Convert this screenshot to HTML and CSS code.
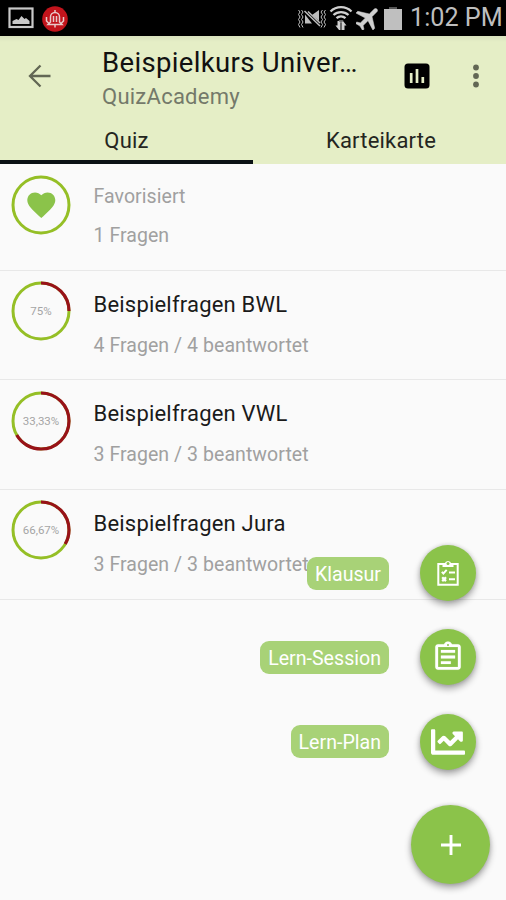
FILE: index.html
```html
<!DOCTYPE html>
<html lang="de">
<head>
    <meta charset="UTF-8">
    <meta name="viewport" content="width=device-width, initial-scale=1.0">
    <title>Beispielkurs</title>
    <link rel="stylesheet" href="styles.css">
</head>
<body>
    <div class="app">
        <div class="status-bar">
            <div class="status-left">
                <svg class="icon-picture" viewBox="0 0 26 22" width="26" height="22">
                    <rect x="1.5" y="1.5" width="23" height="18.500" fill="none" stroke="#c9c9c9" stroke-width="2.2"/>
                    <path d="M4.500 17v-3l4-2 2 1 3-4 3 3 1.500-1 3.500 3v3z" fill="#c9c9c9"/>
                </svg>
                <svg class="icon-alarm" viewBox="0 0 26 26" width="26" height="26">
                    <circle cx="13" cy="13" r="12.800" fill="#c2141c"/>
                    <path d="M6 18.500l2.500-2.500v-5a4.500 4.500 0 0 1 9 0v5l2.500 2.500zM13 4v3M13 18.500v3M11.500 10v6M14.500 10v6M4.500 11v4l2 2M21.500 11v4l-2 2" fill="none" stroke="#e8caca" stroke-width="1.500"/>
                </svg>
            </div>
            <div class="status-right">
                <svg class="icon-mute" viewBox="0 0 30 22" width="30" height="22">
                    <path d="M1.500 2l1.500 2-1.500 2.500 1.500 2.500-1.500 2.500 1.500 2.500-1.500 2.500 1.500 3M4.500 2l1.500 2-1.500 2.500 1.500 2.500-1.500 2.500 1.500 2.500-1.500 2.500 1.500 3M25.500 2l-1.500 2 1.500 2.500-1.500 2.500 1.500 2.500-1.500 2.500 1.500 2.500-1.500 3M28.500 2l-1.500 2 1.500 2.500-1.500 2.500 1.500 2.500-1.500 2.500 1.500 2.500-1.500 3" fill="none" stroke="#bdbdbd" stroke-width="1"/>
                    <path d="M8 6.500v9h7zM15 7l7-5v11z" fill="#bdbdbd"/>
                    <path d="M7.500 3l15.500 15M11 3.500l12 11.500" stroke="#bdbdbd" stroke-width="1.500"/>
                </svg>
                <svg class="icon-wifi" viewBox="0 0 24 26" width="24" height="26">
                    <path d="M1.500 6.500a15 15 0 0 1 21 0M4.500 10a11 11 0 0 1 15 0M7.500 13.200a6.800 6.800 0 0 1 9 0" fill="none" stroke="#cfcfcf" stroke-width="2.300"/>
                    <path d="M9.500 15.500h5l-2.500 2zM6.500 20.500l3.500 4.500h1.500v-9h-3v4.500zM17.500 20.500l-3.500-4.500h-1.500v9h3v-4.500z" fill="#cfcfcf"/>
                </svg>
                <svg class="icon-plane" viewBox="2.500 2.500 19 19" width="24" height="24">
                    <path transform="rotate(45 12 12)" d="M21.500 16v-2l-8-5V3.500c0-.83-.67-1.500-1.500-1.500s-1.500.67-1.500 1.500V9l-8 5v2l8-2.500V19l-2.500 1.500V22l4-1 4 1v-1.500L13.500 19v-5.500z" fill="#d0d0d0" stroke="#d0d0d0" stroke-width=".4"/>
                </svg>
                <svg class="icon-battery" viewBox="0 0 18 23" width="18" height="23">
                    <path d="M5 0h8v2H5z" fill="#555"/>
                    <path d="M0 2h18v21H0z" fill="#bfbfbf"/>
                </svg>
                <span class="clock">1:02 PM</span>
            </div>
        </div>

        <header class="header">
            <div class="toolbar">
                <svg class="back" viewBox="0 0 24 24" width="24" height="24">
                    <path d="M22.500 12H2M12.500 1.500L2 12l10.500 10.500" fill="none" stroke="#626754" stroke-width="2.300"/>
                </svg>
                <div class="titles">
                    <h1>Beispielkurs Univer…</h1>
                    <p>QuizAcademy</p>
                </div>
                <svg class="chart" viewBox="0 0 26 26" width="26" height="26">
                    <rect x=".5" y=".5" width="25" height="25" rx="3.500" fill="#000"/>
                    <path d="M7.200 20V10M13 20V6M18.800 20v-6" stroke="#e5eec6" stroke-width="2.700"/>
                </svg>
                <svg class="more" viewBox="0 0 6 24" width="6" height="24">
                    <circle cx="3" cy="3.500" r="2.900"/>
                    <circle cx="3" cy="12" r="2.900"/>
                    <circle cx="3" cy="20.500" r="2.900"/>
                </svg>
            </div>
            <nav class="tabs">
                <a class="tab active">Quiz</a>
                <a class="tab">Karteikarte</a>
            </nav>
        </header>

        <main class="list">
            <div class="row favorite">
                <svg class="ring" viewBox="0 0 60 60">
                    <circle class="good" cx="30" cy="30" r="28"/>
                    <path transform="translate(13.500 13.200) scale(1.400)" d="M12 21.350l-1.450-1.320C5.400 15.360 2 12.280 2 8.500 2 5.420 4.420 3 7.500 3c1.740 0 3.410.81 4.500 2.090C13.090 3.810 14.760 3 16.500 3 19.580 3 22 5.420 22 8.500c0 3.780-3.400 6.860-8.550 11.540L12 21.350z" fill="#8bc34a"/>
                </svg>
                <div class="row-text">
                    <p class="name">Favorisiert</p>
                    <p class="count">1 Fragen</p>
                </div>
            </div>
            <div class="row">
                <svg class="ring" viewBox="0 0 60 60">
                    <circle class="good" cx="30" cy="30" r="28"/>
                    <circle class="bad" cx="30" cy="30" r="28" pathLength="100" stroke-dasharray="25 75"/>
                    <text x="30" y="34">75%</text>
                </svg>
                <div class="row-text">
                    <h2>Beispielfragen BWL</h2>
                    <p class="count">4 Fragen / 4 beantwortet</p>
                </div>
            </div>
            <div class="row">
                <svg class="ring" viewBox="0 0 60 60">
                    <circle class="good" cx="30" cy="30" r="28"/>
                    <circle class="bad" cx="30" cy="30" r="28" pathLength="100" stroke-dasharray="66.670 33.330"/>
                    <text x="30" y="34">33,33%</text>
                </svg>
                <div class="row-text">
                    <h2>Beispielfragen VWL</h2>
                    <p class="count">3 Fragen / 3 beantwortet</p>
                </div>
            </div>
            <div class="row">
                <svg class="ring" viewBox="0 0 60 60">
                    <circle class="good" cx="30" cy="30" r="28"/>
                    <circle class="bad" cx="30" cy="30" r="28" pathLength="100" stroke-dasharray="33.330 66.670"/>
                    <text x="30" y="34">66,67%</text>
                </svg>
                <div class="row-text">
                    <h2>Beispielfragen Jura</h2>
                    <p class="count">3 Fragen / 3 beantwortet</p>
                </div>
            </div>
        </main>

        <div class="fab-menu">
            <div class="action">
                <span class="label">Klausur</span>
                <button class="fab">
                    <svg viewBox="0 0 22 26" width="22" height="26">
                        <path d="M1.300 4h19.400v20.700H1.300z" fill="none" stroke="#fff" stroke-width="2"/>
                        <path d="M5.500 7V3.500h2.200a3.400 3.400 0 0 1 6.600 0h2.200V7z" fill="#fff"/>
                        <circle cx="11" cy="3.600" r="1.500" fill="#8bc34a"/>
                        <path d="M4.800 11.800l1.600 1.700 3.300-3.700M12 12.500h6M12 19.200h6" fill="none" stroke="#fff" stroke-width="1.900"/>
                        <path d="M5.200 17.300l3.800 3.800M9 17.300l-3.800 3.800" stroke="#fff" stroke-width="2.300"/>
                    </svg>
                </button>
            </div>
            <div class="action">
                <span class="label">Lern-Session</span>
                <button class="fab">
                    <svg viewBox="0 0 24 24" width="34" height="34">
                        <path d="M7 15h7v2H7zm0-4h10v2H7zm0-4h10v2H7zm12-4h-4.180C14.400 1.840 13.300 1 12 1c-1.300 0-2.400.84-2.820 2H5c-1.100 0-2 .9-2 2v14c0 1.100.9 2 2 2h14c1.100 0 2-.9 2-2V5c0-1.100-.9-2-2-2zm-7-.25c.41 0 .75.34.75.75s-.34.75-.75.75-.75-.34-.75-.75.340-.75.750-.750zM19 19H5V5h14v14z" fill="#fff" stroke="#fff" stroke-width=".1"/>
                    </svg>
                </button>
            </div>
            <div class="action">
                <span class="label">Lern-Plan</span>
                <button class="fab">
                    <svg viewBox="0 0 512 512" width="34" height="34">
                        <path d="M496 384H64V80c0-8.840-7.160-16-16-16H16C7.160 64 0 71.160 0 80v336c0 17.670 14.330 32 32 32h464c8.840 0 16-7.160 16-16v-32c0-8.840-7.160-16-16-16zM464 96H345.940c-21.380 0-32.090 25.850-16.970 40.970l32.400 32.400L288 242.750l-73.370-73.370c-12.500-12.500-32.760-12.500-45.250 0l-68.690 68.690c-6.250 6.250-6.250 16.380 0 22.630l22.620 22.620c6.250 6.250 16.380 6.250 22.630 0L192 237.250l73.370 73.370c12.500 12.500 32.760 12.500 45.250 0l96-96 32.400 32.400c15.120 15.120 40.970 4.410 40.970-16.970V112c.010-8.840-7.150-16-15.990-16z" fill="#fff"/>
                    </svg>
                </button>
            </div>
            <button class="fab fab-main">
                <svg viewBox="0 0 20 20" width="20" height="20">
                    <path d="M10 0v20M0 10h20" stroke="#fff" stroke-width="2.900"/>
                </svg>
            </button>
        </div>
    </div>
</body>
</html>
```

FILE: styles.css
```css
* {
    box-sizing: border-box;
}

body {
    margin: 0;
    background-color: #fafafa;
    font-family: Roboto, 'Liberation Sans', sans-serif;
}

h1, h2, p {
    margin: 0;
    font-weight: 400;
    white-space: nowrap;
}

svg {
    display: block;
    flex: none;
}

.app {
    position: relative;
    width: 506px;
    height: 900px;
    overflow: hidden;
}

.status-bar {
    display: flex;
    justify-content: space-between;
    height: 36px;
    padding: 0 4px 0 8px;
    background-color: #000;
}

.status-left, .status-right {
    display: flex;
    align-items: center;
}

.status-left {
    gap: 8px;
}

.icon-alarm {
    margin-top: 2px;
}

.icon-mute {
    margin-right: 2px;
    margin-top: 2px;
}

.icon-plane {
    margin-left: 3px;
}

.icon-battery {
    margin-left: 4px;
}

.clock {
    width: 92px;
    margin-left: 8px;
    color: #bebebe;
    font-size: 25.2px;
    line-height: 38px;
    white-space: nowrap;
}

.header {
    height: 128px;
    background: linear-gradient(#d9e2be, #e5eec6 6px);
}

.toolbar {
    display: flex;
    height: 80px;
    padding-left: 28px;
}

.back {
    margin-top: 28px;
}

.titles {
    width: 260px;
    margin-left: 50px;
}

.titles h1 {
    margin-top: 9px;
    color: #111;
    font-size: 27.5px;
    letter-spacing: 0.34px;
    line-height: 35px;
}

.titles p {
    color: #74796a;
    font-size: 22px;
    letter-spacing: 0.25px;
    line-height: 34px;
}

.chart {
    margin: 27px 0 0 42px;
}

.more {
    margin: 28px 0 0 43px;
    fill: #626754;
}

.tabs {
    display: flex;
    height: 48px;
}

.tab {
    width: 253px;
    color: #24261f;
    font-size: 22px;
    letter-spacing: 0.2px;
    line-height: 50px;
    text-align: center;
}

.tab + .tab {
    padding-left: 3px;
}

.tab.active {
    border-bottom: 4px solid #0b1215;
}

.row {
    display: flex;
    height: 109.7px;
    padding: 10.5px 0 0 11px;
    border-bottom: 1.5px solid #e8e8e8;
}

.row.favorite {
    height: 106.5px;
    padding-top: 11px;
}

.ring {
    width: 60px;
    height: 60px;
}

.ring circle {
    fill: none;
    stroke-width: 3;
}

.ring .good {
    stroke: #95bf26;
}

.ring .bad {
    stroke: #981219;
    stroke-width: 3.2;
    transform: rotate(-90deg);
    transform-origin: 30px 30px;
}

.ring text {
    fill: #a5a5a5;
    font-size: 11.5px;
    text-anchor: middle;
}

.row-text {
    margin: 8.6px 0 0 22.5px;
}

.row-text h2 {
    color: #1a1a1a;
    font-size: 22px;
    letter-spacing: 0.2px;
    line-height: 30px;
}

.row-text p {
    color: #a0a0a0;
    font-size: 19.5px;
    letter-spacing: 0.06px;
    line-height: 28px;
}

.row-text .count {
    margin-top: 12px;
}

.favorite .row-text {
    margin-top: 8px;
}

.favorite .row-text .count {
    margin-top: 10.5px;
}

/* floating actions lie over the list */
.fab-menu {
    position: absolute;
    right: 16px;
    bottom: 16px;
    display: flex;
    flex-direction: column;
    align-items: flex-end;
}

.action {
    display: flex;
    align-items: center;
    height: 56px;
    margin: 0 14px 28.3px 0;
}

.label {
    height: 33px;
    margin-right: 31px;
    padding: 0 8px;
    border-radius: 9px;
    background-color: #a8d277;
    color: #fff;
    font-size: 19.6px;
    line-height: 35px;
    white-space: nowrap;
}

.fab {
    display: flex;
    justify-content: center;
    align-items: center;
    width: 56px;
    height: 56px;
    padding: 0;
    border: none;
    border-radius: 50%;
    background-color: #8bc34a;
    box-shadow: 0 4px 7px rgba(0, 0, 0, 0.33), 0 0 4px rgba(0, 0, 0, 0.15);
}

.fab-main {
    width: 79px;
    height: 79px;
    margin-top: 7px;
}
```
